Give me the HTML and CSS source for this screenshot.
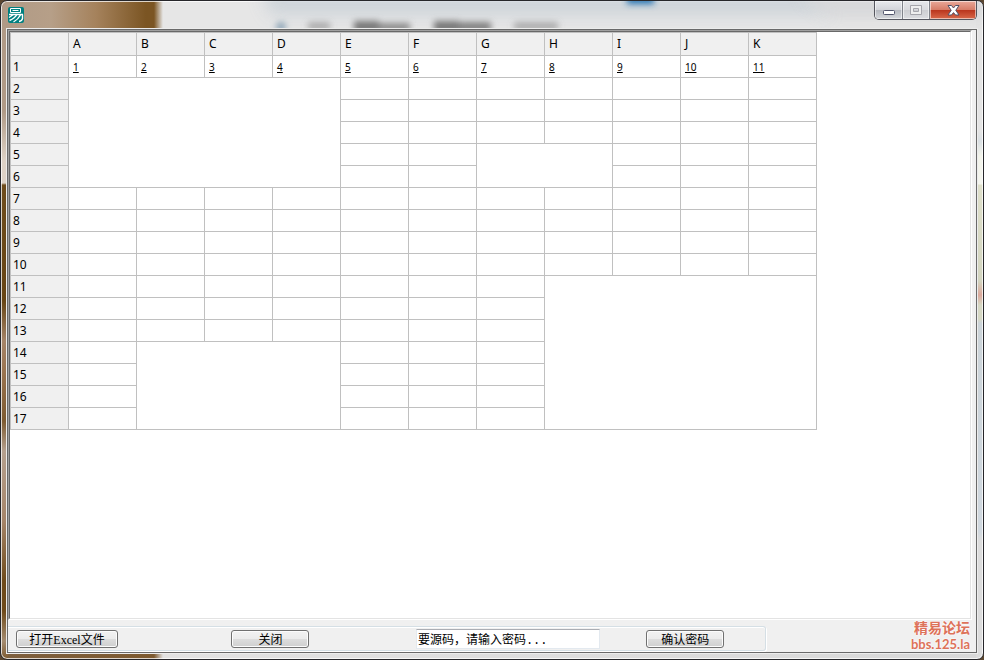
FILE: index.html
```
<!DOCTYPE html>
<html lang="zh-CN">
<head>
    <meta charset="UTF-8">
    <meta name="viewport" content="width=device-width, initial-scale=1.0">
    <title>Excel</title>
    <link rel="stylesheet" href="styles.css">
</head>
<body>

    <div class="window">
        <header class="titlebar">
            <!-- Blurred desktop behind the glass -->
            <svg class="glass" width="984" height="28" viewBox="0 0 984 28" aria-hidden="true">
                <defs>
                    <filter id="soft" x="-20%" y="-80%" width="140%" height="260%"><feGaussianBlur stdDeviation="3"/></filter>
                    <filter id="wide" x="-20%" y="-80%" width="140%" height="260%"><feGaussianBlur stdDeviation="8"/></filter>
                </defs>
                <path d="M260 -10H800L830 14H270z" fill="#c3ccd4" opacity=".7" filter="url(#wide)"/>
                <path d="M800 -6H984V16H830z" fill="#c6c8cc" opacity=".5" filter="url(#wide)"/>
                <rect x="626" y="-6" width="27" height="9" fill="#2674b4" filter="url(#soft)"/>
                <g fill="#777" filter="url(#soft)">
                    <circle cx="280" cy="26" r="5" fill="#8ba3b5"/>
                    <rect x="307" y="21" width="22" height="9" opacity=".5"/>
                    <rect x="353" y="20" width="25" height="11"/>
                    <rect x="378" y="22" width="31" height="9" opacity=".8"/>
                    <rect x="433" y="20" width="25" height="11"/>
                    <rect x="458" y="21" width="32" height="10" opacity=".9"/>
                    <rect x="513" y="21" width="44" height="9" opacity=".5"/>
                </g>
            </svg>
            <svg class="app-icon" viewBox="0 0 16 16" role="img" aria-label="易">
                <rect width="16" height="16" rx="2" fill="#008080"/>
                <g fill="none" stroke="#fff">
                    <path d="M2.5 1.5H12.5V5.5H2.5zM4.5 3.5H10.5"/>
                    <path d="M1 7.5H15M14.5 7.5V11.5Q14 14 11 14.5M5.5 7.5L1 10.5M9 7.5Q7 11 1.5 13.5M12.5 8Q10 12.5 5.5 15" stroke-width="1.4"/>
                </g>
            </svg>
            <div class="window-controls">
                <button class="control minimize" type="button" aria-label="最小化">
                    <svg width="12" height="6" viewBox="0 0 12 6"><rect x=".5" y=".5" width="11" height="4" rx="1" fill="#fff" stroke="#50536a"/></svg>
                </button>
                <button class="control maximize" type="button" aria-label="最大化" disabled>
                    <svg width="12" height="10" viewBox="0 0 12 10"><path d="M.5.5H11.5V9.5H.5zM3.5 3.5V6.5H8.5V3.5z" fill="#eee" fill-rule="evenodd" stroke="#a5a5ab"/></svg>
                </button>
                <button class="control close" type="button" aria-label="关闭窗口">
                    <svg width="13" height="11" viewBox="0 0 13 11"><path d="M1 .5H4.5L6.5 3 8.5 .5H12L8.8 5.3 12 10H8.5L6.5 7.6 4.5 10H1L4.2 5.3z" fill="#fff" stroke="#505066"/></svg>
                </button>
            </div>
        </header>

        <main class="client">
            <div class="sheet">
                <div class="sheet-inner">
                    <table class="grid">
                        <thead>
                            <tr><th class="corner"></th><th>A</th><th>B</th><th>C</th><th>D</th><th>E</th><th>F</th><th>G</th><th>H</th><th>I</th><th>J</th><th>K</th></tr>
                        </thead>
                        <tbody>
                            <tr><th>1</th><td>1</td><td>2</td><td>3</td><td>4</td><td>5</td><td>6</td><td>7</td><td>8</td><td>9</td><td>10</td><td>11</td></tr>
                            <tr><th>2</th><td colspan="4" rowspan="5"></td><td></td><td></td><td></td><td></td><td></td><td></td><td></td></tr>
                            <tr><th>3</th><td></td><td></td><td></td><td></td><td></td><td></td><td></td></tr>
                            <tr><th>4</th><td></td><td></td><td></td><td></td><td></td><td></td><td></td></tr>
                            <tr><th>5</th><td></td><td></td><td colspan="2" rowspan="2"></td><td></td><td></td><td></td></tr>
                            <tr><th>6</th><td></td><td></td><td></td><td></td><td></td></tr>
                            <tr><th>7</th><td></td><td></td><td></td><td></td><td></td><td></td><td></td><td></td><td></td><td></td><td></td></tr>
                            <tr><th>8</th><td></td><td></td><td></td><td></td><td></td><td></td><td></td><td></td><td></td><td></td><td></td></tr>
                            <tr><th>9</th><td></td><td></td><td></td><td></td><td></td><td></td><td></td><td></td><td></td><td></td><td></td></tr>
                            <tr><th>10</th><td></td><td></td><td></td><td></td><td></td><td></td><td></td><td></td><td></td><td></td><td></td></tr>
                            <tr><th>11</th><td></td><td></td><td></td><td></td><td></td><td></td><td></td><td colspan="4" rowspan="7"></td></tr>
                            <tr><th>12</th><td></td><td></td><td></td><td></td><td></td><td></td><td></td></tr>
                            <tr><th>13</th><td></td><td></td><td></td><td></td><td></td><td></td><td></td></tr>
                            <tr><th>14</th><td></td><td colspan="3" rowspan="4"></td><td></td><td></td><td></td></tr>
                            <tr><th>15</th><td></td><td></td><td></td><td></td></tr>
                            <tr><th>16</th><td></td><td></td><td></td><td></td></tr>
                            <tr><th>17</th><td></td><td></td><td></td><td></td></tr>
                        </tbody>
                    </table>
                </div>
            </div>

            <footer class="bottom">
                <form class="group">
                    <div><button class="btn btn-wide" type="button">打开Excel文件</button></div>
                    <div><button class="btn" type="button">关闭</button></div>
                    <div><input class="password" type="text" value="要源码，请输入密码..." aria-label="密码"></div>
                    <div><button class="btn" type="button">确认密码</button></div>
                </form>
                <div class="brand">
                    <div class="brand-name">精易论坛</div>
                    <div class="brand-url">bbs.125.la</div>
                </div>
            </footer>
        </main>
    </div>

</body>
</html>
```
FILE: styles.css
```
* {
    box-sizing: border-box;
}

body {
    margin: 0;
    background: #5b4630;
    font-family: "Noto Sans", "Noto Sans CJK SC", sans-serif;
    font-size: 12px;
    color: #000;
}

/* Window frame */
.window {
    position: relative;
    display: flex;
    flex-direction: column;
    height: 100vh;
    padding: 0 5px 5px;
    border: 1px solid #26262a;
    border-radius: 7px;
    overflow: hidden;
    box-shadow: inset 0 0 0 1px rgba(255, 255, 255, 0.75);
    background:
        linear-gradient(#b09a86, #b09a86 110px, #ddd2c6 160px, #ddd2c6 182px, #6e4c1c 184px, #674514 300px, #a58468 340px, #9a7450 370px, #7d5a30 420px, #b5a08e 450px, #a58468 520px, #6e4a1a 580px, #6e4a1a 610px, #a58c70 640px, #7d5a30) 0 0 / 7px 100% no-repeat,
        linear-gradient(#e4e4e4 130px, #d9dfe3 140px, #f2f3ea 155px, #f4f5ee 183px, #dfe0cb 184px, #d3d5c0 280px, #dca99c 294px, #d6d8c4 304px, #d6d8c4 318px, #ccd4d9 322px, #d0d8df 530px, #dcdcdc 540px) 100% 0 / 7px 100% no-repeat,
        linear-gradient(90deg, #b09a86, #b69f88 50px, #a5825c 95px, #7b5523 145px, #7b5523 153px, #e6e6e6 162px) 0 0 / 100% 30px no-repeat,
        linear-gradient(90deg, #7d6040, #7d5a30 153px, #e2e2e2 162px, #d8d8d8) 0 100% / 100% 7px no-repeat,
        #e4e4e4;
}

.titlebar {
    display: flex;
    justify-content: space-between;
    flex: none;
    height: 27px;
    padding: 0 1px 0 2px;
}

.glass {
    position: absolute;
    top: 0;
    left: 0;
}

.app-icon {
    position: relative;
    width: 16px;
    height: 16px;
    margin-top: 6px;
}

.window-controls {
    position: relative;
    display: flex;
    height: 19px;
    border: 1px solid #55565e;
    border-top: 0;
    border-radius: 0 0 5px 5px;
    overflow: hidden;
}

.control {
    display: flex;
    align-items: center;
    justify-content: center;
    width: 28px;
    padding: 0;
    border: 0;
    border-right: 1px solid #80838a;
    background: linear-gradient(#e8eaee, #d2d4d9 50%, #b4b7be 50%, #d6d8dc);
    box-shadow: inset 0 0 0 1px rgba(255, 255, 255, 0.55);
}

.control.minimize {
    padding-top: 5px;
}

.control.maximize {
    width: 27px;
    background: linear-gradient(#e6e7ea, #d9dade 50%, #cdced2 50%, #dcdde0);
}

.control.close {
    width: 46px;
    border-right: 0;
    background: linear-gradient(#e9a99a, #d67b66 50%, #b9341c 50%, #d9694a);
}

/* Client area */
.client {
    display: flex;
    flex-direction: column;
    flex: 1;
    min-height: 0;
    margin: 1px;
    border: 1px solid #696969;
    outline: 1px solid #ececec;
    background: #f0f0f0;
    position: relative;
}

/* Sunken edge, two lines deep */
.sheet {
    display: flex;
    flex: 1;
    min-height: 0;
    margin-right: 4px;
    border: 1px solid;
    border-color: #a0a0a0 #fff #fff #a0a0a0;
}

.sheet-inner {
    flex: 1;
    min-width: 0;
    overflow: hidden;
    border: 1px solid;
    border-color: #696969 #e3e3e3 #e3e3e3 #696969;
    background: #fff;
}

.grid {
    border-spacing: 0;
    table-layout: fixed;
    width: 807px;
    border-top: 1px solid #c0c0c0;
    border-left: 1px solid #c0c0c0;
}

.grid th,
.grid td {
    width: 68px;
    height: 22px;
    padding: 0 4px;
    border-right: 1px solid #c0c0c0;
    border-bottom: 1px solid #c0c0c0;
    line-height: 16px;
    text-align: left;
}

.grid th {
    background: #f0f0f0;
    font-weight: 400;
}

.grid thead th {
    height: 23px;
}

.grid .corner {
    width: 58px;
}

.grid tbody th {
    padding: 0 2px;
}

.grid td {
    font-size: 10px;
    text-decoration: underline;
}

/* Bottom bar */
.bottom {
    display: flex;
    flex: none;
    height: 32px;
}

.group {
    display: grid;
    grid-template-columns: 216fr 185fr 231fr 119fr;
    align-items: center;
    flex: 1;
    height: 25px;
    margin-top: 6px;
    padding-left: 8px;
    border: 1px solid #d5dfe5;
    border-left: 0;
    border-radius: 0 3px 3px 0;
    box-shadow: inset 0 1px 0 #fff, 1px 1px 0 #fff;
}

.group div {
    display: flex;
}

.btn {
    width: 78px;
    height: 18px;
    padding: 0;
    border: 1px solid #707070;
    border-radius: 3px;
    background: linear-gradient(#f2f2f2, #ebebeb 50%, #dddddd 50%, #cfcfcf);
    box-shadow: inset 0 0 0 1px #fcfcfc;
    color: #000;
    font-family: "Liberation Serif", "Noto Sans CJK SC", serif;
    font-size: 12px;
    line-height: 18px;
}

.btn-wide {
    width: 102px;
}

.password {
    width: 184px;
    height: 20px;
    padding: 0 1px;
    border: 1px solid #e3e9ef;
    border-top-color: #abadb3;
    background: #fff;
    color: #000;
    font-family: "Liberation Mono", "Noto Sans CJK SC", monospace;
    font-size: 12px;
}

/* Forum mark */
.brand {
    width: 210px;
    padding-right: 6px;
    color: #dd7259;
    font-weight: 700;
    text-align: right;
    text-shadow: 0 0 2px #fff, 0 0 2px #fff;
}

.brand-name {
    font-size: 14px;
    line-height: 16px;
}

.brand-url {
    font-family: Lato, sans-serif;
    font-size: 13px;
    line-height: 16px;
}
```
